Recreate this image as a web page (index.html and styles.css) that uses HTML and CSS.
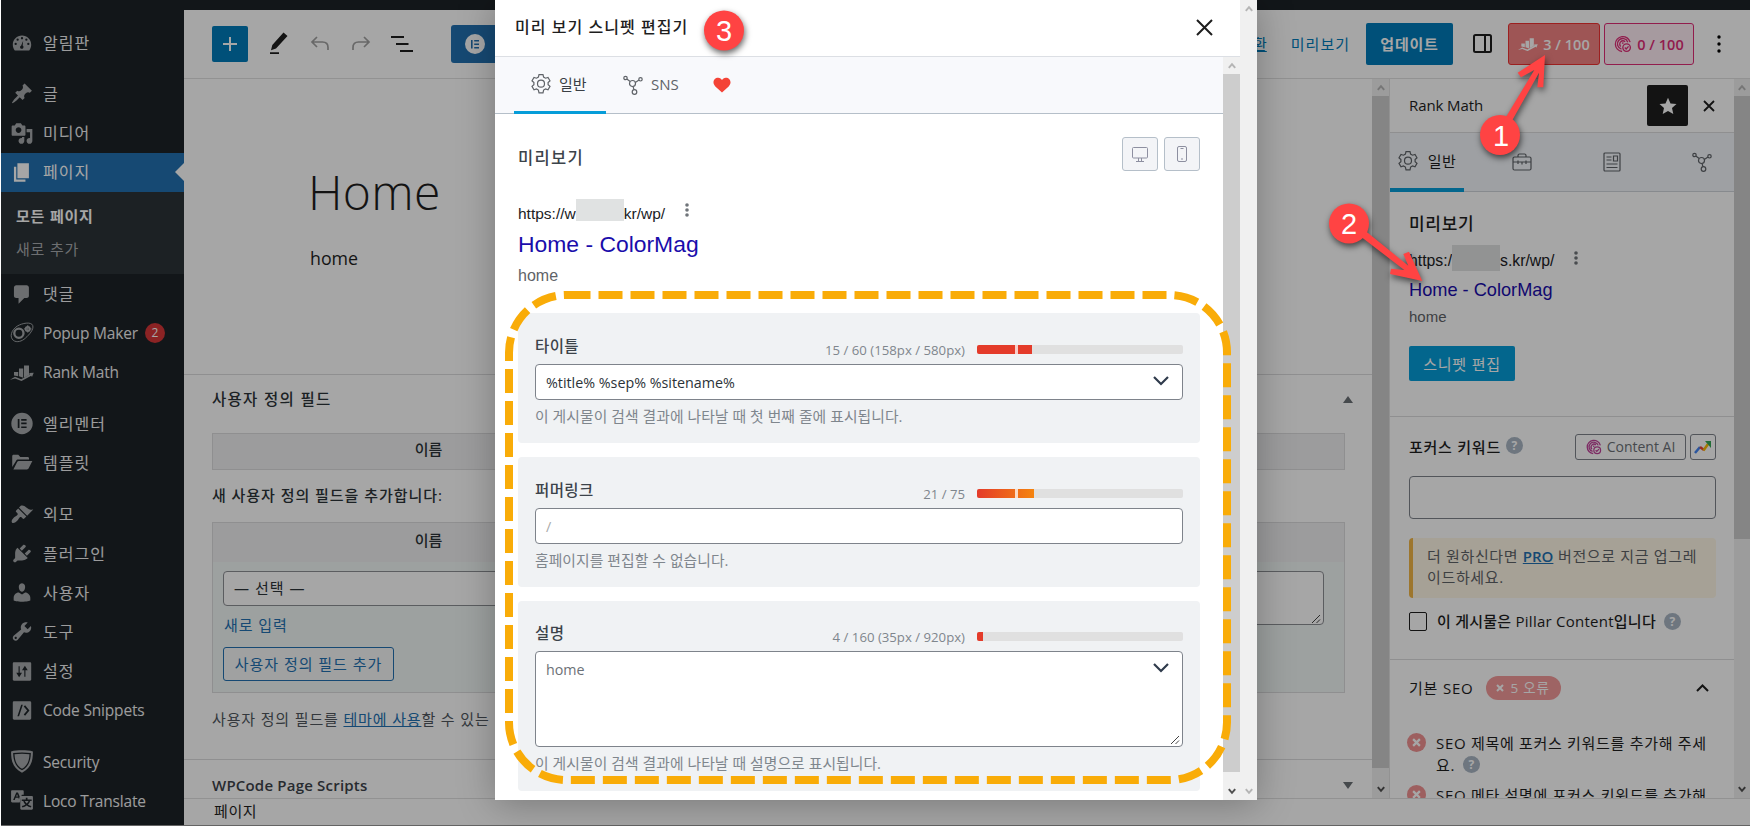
FILE: index.html
```
<!DOCTYPE html>
<html lang="ko">
<head>
    <meta charset="UTF-8" />
    <meta name="viewport" content="width=device-width, initial-scale=1.0" />
    <title>페이지 편집</title>
    <link rel="stylesheet" href="styles.css">
</head>
<body>
    <svg class="sprite">
        <symbol id="gear" viewBox="0 0 20 20"><path d="M8 .6h4l.6 2.500 1.900 1.100 2.500-.8 2 3.400-1.900 1.700v2.200l1.900 1.700-2 3.400-2.500-.8-1.900 1.100-.6 2.700H8l-.6-2.700-1.900-1.100-2.500.8-2-3.400 1.900-1.700V8.500L1 6.800l2-3.400 2.500.8 1.900-1.100z" /><circle cx="10" cy="9.700" r="3.500" /></symbol>
        <symbol id="share" viewBox="0 0 20 20"><circle cx="9.500" cy="8.500" r="3" /><circle cx="2.500" cy="3" r="1.700" /><circle cx="17.500" cy="4.300" r="1.700" /><circle cx="11.500" cy="17" r="2.300" /><path d="M3.800 4.100l3.400 2.500M12.300 7.400l3.700-2.300M10.100 11.500l.8 3.200" /></symbol>
        <symbol id="chart" viewBox="0 0 24 16"><path d="M4 7.500h4.200v4.300L4 11zM9 4h4.200v9.300L9 11.800zM14 1h5v9.400l-5 2.800z" /><path d="M0 15.200l5-2.900 6.200 2.400 8.600-5-.7-1.100 4.600-.4-1.700 4.200-.8-1.200-9.700 5.300-6.400-2.400z" /></symbol>
        <symbol id="ai" viewBox="0 0 20 20"><path d="M9 18.300A8.300 8.300 0 1 1 17.900 8M8.300 15.600A5.900 5.900 0 1 1 15.300 8M7.500 12.700A3.400 3.400 0 1 1 12.400 7.500M9 9.500l1.500-1" /><circle cx="14" cy="14" r="4.200" /><path d="M12 14l1.500 1.500 2.700-2.900" /></symbol>
        <symbol id="up" viewBox="0 0 8 7"><path d="M.8 5.800L4 2.200l3.200 3.600" /></symbol>
        <symbol id="down" viewBox="0 0 8 7"><path d="M.8 1.200L4 4.800l3.200-3.600" /></symbol>
        <symbol id="grip" viewBox="0 0 10 10"><path d="M1 9l8-8M5.500 9L9 5.500" /></symbol>
    </svg>

    <div class="page">
        <div class="adminbar"></div>
        <div class="workspace">
            <nav class="sidebar">
                <a class="menu-item"><svg viewBox="0 0 20 20"><path fill-rule="evenodd" d="M3.760 17h12.480c1.100-1.370 1.760-3.110 1.760-5 0-4.420-3.580-8-8-8s-8 3.580-8 8c0 1.890.66 3.630 1.760 5zM10 5.300a1 1 0 1 1 0 2 1 1 0 0 1 0-2zM6.200 6.500a1 1 0 1 1 0 2 1 1 0 0 1 0-2zM13.800 6.500a1 1 0 1 1 0 2 1 1 0 0 1 0-2zM4.500 10.200a1 1 0 1 1 0 2 1 1 0 0 1 0-2zM15.500 10.200a1 1 0 1 1 0 2 1 1 0 0 1 0-2zM11 8.500l-.4 4.200c.8.600.9 1.500.4 2.200-.7.800-2 .8-2.500-.2-.4-.9 0-1.600.7-1.900z" /></svg>알림판</a>
                <div class="menu-gap"></div>
                <a class="menu-item"><svg viewBox="0 0 20 20"><path d="M10.440 3.020l1.820-1.820 6.360 6.350-1.830 1.820c-1.050-.68-2.480-.57-3.410.36l-.75.75c-.92.93-1.040 2.350-.35 3.410l-1.830 1.820-2.410-2.410-2.800 2.790c-.42.42-3.380 2.710-3.800 2.290s1.860-3.390 2.280-3.810l2.790-2.790L4.100 9.360l1.830-1.820c1.050.69 2.480.57 3.400-.36l.75-.75c.93-.92 1.050-2.350.36-3.410z" /></svg>글</a>
                <a class="menu-item"><svg viewBox="0 0 20 20"><path fill-rule="evenodd" d="M13 11V4c0-.55-.45-1-1-1h-1.670L9 1H5L3.670 3H2c-.55 0-1 .45-1 1v7c0 .55.45 1 1 1h10c.55 0 1-.45 1-1zM7 4.500c1.380 0 2.500 1.120 2.500 2.500S8.380 9.500 7 9.500 4.500 8.380 4.500 7 5.620 4.500 7 4.500zM14 6h5v10.500c0 1.380-1.120 2.500-2.500 2.500S14 17.880 14 16.500s1.120-2.500 2.500-2.500c.17 0 .34.02.5.05V9h-3V6zm-4 8.050V13h2v3.500c0 1.380-1.120 2.500-2.500 2.500S7 17.880 7 16.500 8.120 14 9.500 14c.17 0 .34.02.5.05z" /></svg>미디어</a>
                <a class="menu-item current"><svg viewBox="0 0 20 20"><path d="M6 15V2h10v13H6zm-1 1h8v2H3V5h2v11z" /></svg>페이지</a>
                <div class="submenu">
                    <a class="active">모든 페이지</a>
                    <a>새로 추가</a>
                </div>
                <a class="menu-item"><svg viewBox="0 0 20 20"><path d="M5 2h9c1.100 0 2 .9 2 2v7c0 1.100-.9 2-2 2h-2l-5 5v-5H5c-1.100 0-2-.9-2-2V4c0-1.100.9-2 2-2z" /></svg>댓글</a>
                <a class="menu-item latin"><svg class="line" viewBox="0 0 20 20"><path d="M6 3.500C10 1 18-.5 19.300 3c1.200 3.500-3 8-6.300 11-3 2.800-7.500 4.200-10.500 2C-1 13 .5 7 6 3.500z" /><circle cx="7.300" cy="9.800" r="4" stroke-width="2" /><circle cx="15" cy="6" r="1.800" stroke-width="1.600" /><path d="M15 2.700v6.600M11.700 6h6.600" /></svg>Popup Maker<span class="count">2</span></a>
                <a class="menu-item latin"><svg><use href="#chart" /></svg>Rank Math</a>
                <div class="menu-gap"></div>
                <a class="menu-item"><svg viewBox="0 0 20 20"><path fill-rule="evenodd" d="M10 .7a9.300 9.300 0 1 1 0 18.600A9.300 9.300 0 0 1 10 .7zM6.300 6v8h1.500V6zm3 0v1.500H14V6zm0 3.200v1.500H14V9.200zm0 3.300V14H14v-1.500z" /></svg>엘리멘터</a>
                <a class="menu-item"><svg viewBox="0 0 20 20"><path d="M1.500 14V4.500c0-.8.500-1.300 1.300-1.300h4l1.700 2h6.300c.8 0 1.300.5 1.300 1.200v1H6.800c-.9 0-1.600.4-2 1.200zM2.500 16l3.300-6.400c.3-.6.8-.9 1.500-.9H19l-3.200 6.300c-.3.6-.8 1-1.500 1z" /></svg>템플릿</a>
                <div class="menu-gap"></div>
                <a class="menu-item"><svg viewBox="0 0 20 20"><path d="M14.480 11.060L7.410 3.990l1.500-1.500c.5-.56 2.300-.47 3.510.32 1.210.8 1.430 1.280 2.910 2.100 1.180.64 2.450 1.260 4.450.85zm-.71.71L6.700 4.700 4.930 6.470c-.39.39-.39 1.020 0 1.410l1.060 1.060c.39.39.39 1.030 0 1.420-.6.6-1.430 1.110-2.210 1.690-.35.26-.7.53-1.010.84C1.430 14.230.4 16.080 1.400 17.070c.99 1 2.840-.03 4.180-1.360.31-.31.58-.66.85-1.020.57-.78 1.080-1.610 1.690-2.210.39-.39 1.020-.39 1.410 0l1.060 1.060c.39.39 1.020.39 1.410 0z" /></svg>외모</a>
                <a class="menu-item"><svg viewBox="0 0 20 20"><path d="M13.110 4.360L9.870 7.600 8 5.730l3.240-3.240c.35-.34 1.050-.2 1.560.32.52.51.66 1.210.31 1.550zm-8 1.770l.91-1.120 9.010 9.010-1.190.84c-.71.71-2.630 1.160-3.820 1.160H6.140L4.900 17.260c-.59.59-1.540.59-2.120 0-.59-.58-.59-1.530 0-2.120l1.240-1.240v-3.880c0-1.130.4-3.190 1.090-3.890zm7.260 3.970l3.240-3.240c.34-.35 1.040-.21 1.550.31.52.51.66 1.210.31 1.550l-3.240 3.250z" /></svg>플러그인</a>
                <a class="menu-item"><svg viewBox="0 0 20 20"><path d="M10 9.250c-2.270 0-2.730-3.440-2.730-3.440C7 4.020 7.820 2 9.970 2c2.160 0 2.980 2.020 2.710 3.810 0 0-.41 3.440-2.680 3.440zm0 2.570L12.720 10c2.390 0 4.520 2.330 4.520 4.530v2.490s-3.650 1.130-7.240 1.130c-3.650 0-7.240-1.130-7.240-1.130v-2.490c0-2.250 1.940-4.480 4.470-4.480z" /></svg>사용자</a>
                <a class="menu-item"><svg viewBox="0 0 20 20"><path fill-rule="evenodd" d="M16.680 9.770c-1.340 1.340-3.300 1.670-4.950.99l-5.410 6.520c-.99.99-2.590.99-3.580 0s-.99-2.590 0-3.570l6.520-5.420c-.68-1.650-.35-3.610.99-4.950 1.280-1.280 3.120-1.620 4.720-1.060l-2.890 2.890 2.820 2.820 2.860-2.870c.53 1.580.18 3.390-1.080 4.650zM3.810 16.210c.4.39 1.040.39 1.430 0 .4-.4.4-1.040 0-1.430-.39-.4-1.030-.4-1.430 0-.39.39-.39 1.030 0 1.430z" /></svg>도구</a>
                <a class="menu-item"><svg viewBox="0 0 20 20"><path fill-rule="evenodd" d="M18 17V3c0-.55-.45-1-1-1H3c-.55 0-1 .45-1 1v14c0 .55.45 1 1 1h14c.55 0 1-.45 1-1zM8 11h2l-2.500 4L5 11h2V5.500h1zM13 9v5.500h-1V9h-2l2.500-4L15 9z" /></svg>설정</a>
                <a class="menu-item latin"><svg viewBox="0 0 20 20"><path fill-rule="evenodd" d="M3.200 2h13.600c.8 0 1.200.5 1.200 1.200v13.600c0 .8-.5 1.200-1.200 1.200H3.200c-.8 0-1.200-.5-1.200-1.200V3.200c0-.8.500-1.200 1.200-1.200zM9.300 5L6 15h1.400l3.300-10zM11.500 6.500l3 3.500-3 3.500 1.200 1 3.800-4.500-3.800-4.500z" /></svg>Code Snippets</a>
                <div class="menu-gap"></div>
                <a class="menu-item latin"><svg viewBox="0 0 20 20"><path fill-rule="evenodd" d="M.5 1.200C6 0 14 0 19.500 1.200c0 9-2 14.800-9.500 18.500C2.500 16 .5 10.200.5 1.200zM2.300 2.700c.2 7.300 2.200 12 7.700 15 5.500-3 7.500-7.700 7.700-15-4.700-.8-10.700-.8-15.400 0z" /><path d="M3.500 3.700c4-.6 9-.6 13 0-.3 6.300-2 10-6.500 12.700C5.500 13.700 3.800 10 3.500 3.700z" /></svg>Security</a>
                <a class="menu-item latin"><svg viewBox="0 0 20 20"><path fill-rule="evenodd" d="M1.500 1h9c.6 0 1 .4 1 1v3H9.800L8 11.700H1.500c-.6 0-1-.4-1-1V2c0-.6.4-1 1-1zM2.300 9.500h1.400l.7-1.800h2.500L7.400 9 8 6.500 6.500 3H5zM4.900 6.500l.8-2 .8 2z" /><path fill-rule="evenodd" d="M9.500 6h9c.6 0 1 .4 1 1v10c0 .6-.4 1-1 1h-9c-.6 0-1-.4-1-1V7c0-.6.4-1 1-1zM13.300 7.500v1.600h-3.500v1.300h1.300c.3 1.200 1 2.200 1.900 3-1 .7-2 1.100-3.200 1.400l.6 1.300c1.400-.4 2.600-1 3.700-1.800 1 .8 2.200 1.400 3.500 1.800l.6-1.300c-1.100-.3-2.100-.8-3-1.400.9-.8 1.500-1.800 1.900-3h1.300V9.100h-3.600V7.500zM12.500 10.400h3.200c-.3.800-.9 1.500-1.600 2.100-.7-.6-1.300-1.300-1.600-2.100z" /></svg>Loco Translate</a>
            </nav>

            <main class="editor">
                <header class="toolbar">
                    <button class="insert"><svg width="14" height="14" viewBox="0 0 14 14"><path d="M7 0v14M0 7h14" /></svg></button>
                    <div class="tools">
                        <svg width="20" height="24" viewBox="0 0 20 24"><path d="M14.500.500l4 3.600L7 16.500l-5 1.700L3.300 13zM1 20.300h9v1.700H1z" fill="#1e1e1e" /></svg>
                        <svg class="muted" width="20" height="16" viewBox="0 0 20 16"><path d="M7 1L2 6l5 5M2 6h10.500c3.500 0 5.500 2 5.500 5.500V14" /></svg>
                        <svg class="muted" width="20" height="16" viewBox="0 0 20 16"><path d="M13 1l5 5-5 5M18 6H7.500C4 6 2 8 2 11.500V14" /></svg>
                        <svg class="dark" width="23" height="18" viewBox="0 0 23 18"><path d="M0 2h13M5 9h12.500M9 16h13" /></svg>
                    </div>
                    <button class="elementor"><svg width="20" height="20" viewBox="0 0 20 20"><circle cx="10" cy="10" r="10" fill="#fff" /><path d="M6 6h1.600v8.500H6zM9.200 6h4.800v1.600H9.200zM9.200 9.500h4.800V11H9.200zM9.200 13h4.800v1.500H9.200z" fill="#2271b1" /></svg></button>
                    <div class="toolbar-right">
                        <a class="switch-link">초안으로 전환</a>
                        <a class="preview-link">미리보기</a>
                        <button class="update">업데이트</button>
                        <svg class="layout-icon" width="19" height="19" viewBox="0 0 19 19"><rect x="1" y="1" width="17" height="17" rx="1.500" /><path d="M12 1v17" /></svg>
                        <div class="score seo"><svg width="20" height="14"><use href="#chart" /></svg>3 / 100</div>
                        <div class="score ai"><svg width="18" height="18"><use href="#ai" /></svg>0 / 100</div>
                        <svg class="more" width="4" height="18" viewBox="0 0 4 18"><circle cx="2" cy="2" r="1.700" /><circle cx="2" cy="9" r="1.700" /><circle cx="2" cy="16" r="1.700" /></svg>
                    </div>
                </header>

                <div class="editor-body">
                    <section class="content">
                        <div class="canvas">
                            <h1>Home</h1>
                            <p>home</p>
                        </div>
                        <div class="metabox">
                            <div class="metabox-title">사용자 정의 필드<svg width="10" height="7" viewBox="0 0 10 7"><path d="M5 0l5 7H0z" /></svg></div>
                            <div class="field-head boxed"><span>이름</span></div>
                            <div class="add-label">새 사용자 정의 필드을 추가합니다:</div>
                            <div class="new-field">
                                <div class="field-head"><span>이름</span></div>
                                <div class="new-field-row">
                                    <div class="new-field-name">
                                        <div class="select">— 선택 —</div>
                                        <a>새로 입력</a>
                                        <button class="outline">사용자 정의 필드 추가</button>
                                    </div>
                                    <div class="value-box"><svg width="10" height="10"><use href="#grip" /></svg></div>
                                </div>
                            </div>
                            <p class="note">사용자 정의 필드를 <a>테마에 사용</a>할 수 있는</p>
                        </div>
                        <div class="scripts">WPCode Page Scripts<svg width="10" height="7" viewBox="0 0 10 7"><path d="M5 7l5-7H0z" /></svg></div>
                    </section>
                    <div class="scrollbar content-scroll"><svg><use href="#up" /></svg><i class="thumb"></i><svg class="on"><use href="#down" /></svg></div>

                    <aside class="panel">
                        <div class="panel-header">
                            <span>Rank Math</span>
                            <div class="star"><svg width="18" height="18" viewBox="0 0 18 18"><path d="M9 .8l2.500 5.600 6 .6-4.500 4.100 1.300 6L9 14l-5.300 3.100 1.300-6L.5 7l6-.6z" fill="#fff" /></svg></div>
                            <svg class="close-small" width="12" height="12" viewBox="0 0 12 12"><path d="M1 1l10 10M11 1L1 11" /></svg>
                        </div>
                        <div class="panel-tabs">
                            <div class="panel-tab active"><svg><use href="#gear" /></svg>일반</div>
                            <div class="panel-tab"><svg viewBox="0 0 20 20"><rect x="1" y="5" width="18" height="13" rx="1.500" /><path d="M6 5V3.500C6 2.500 6.500 2 7.500 2h5c1 0 1.500.5 1.500 1.500V5M1 10h18M6 8.500V12M14 8.500V12M10 10v2.500" /></svg></div>
                            <div class="panel-tab"><svg viewBox="0 0 20 20"><rect x="2" y="1" width="16" height="18" rx="1" /><path d="M4.500 5h5M4.500 8h5M4.500 12h11M4.500 15.500h11M11.500 4h4v5h-4z" /></svg></div>
                            <div class="panel-tab"><svg><use href="#share" /></svg></div>
                        </div>
                        <div class="panel-preview">
                            <h4>미리보기</h4>
                            <div class="url">https:/<i class="redact"></i>s.kr/wp/<svg class="kebab" width="4" height="14" viewBox="0 0 4 14"><circle cx="2" cy="2" r="1.800" /><circle cx="2" cy="7" r="1.800" /><circle cx="2" cy="12" r="1.800" /></svg></div>
                            <div class="serp-title">Home - ColorMag</div>
                            <div class="serp-desc">home</div>
                            <button class="edit-snippet">스니펫 편집</button>
                        </div>
                        <div class="focus">
                            <div class="focus-row">
                                <span>포커스 키워드</span><i class="help">?</i>
                                <div class="content-ai"><svg width="16" height="16"><use href="#ai" /></svg>Content AI</div>
                                <div class="trend"><svg width="18" height="14" viewBox="0 0 18 14"><path d="M1 13l5-6" stroke="#4285f4" /><path d="M6 7l4 3" stroke="#ea4335" /><path d="M9.500 10.500L14 4" stroke="#fbbc04" /><path d="M11 1h6v7z" fill="#34a853" stroke="none" /></svg></div>
                            </div>
                            <div class="keyword-input"></div>
                            <div class="notice">더 원하신다면 <b>PRO</b> 버전으로 지금 업그레<br>이드하세요.</div>
                            <div class="pillar"><i class="checkbox"></i><span>이 게시물은 Pillar Content입니다</span><i class="help">?</i></div>
                        </div>
                        <div class="basic-seo">
                            <div class="basic-head"><span>기본 SEO</span><div class="errors"><svg width="8" height="8" viewBox="0 0 8 8"><path d="M1 1l6 6M7 1L1 7" /></svg>5 오류</div><svg class="fold" width="13" height="8" viewBox="0 0 13 8"><path d="M1 7l5.500-5.500L12 7" /></svg></div>
                            <div class="check"><i class="fail"><svg width="9" height="9" viewBox="0 0 8 8"><path d="M1 1l6 6M7 1L1 7" /></svg></i><div>SEO 제목에 포커스 키워드를 추가해 주세<br>요. <i class="help">?</i></div></div>
                            <div class="check"><i class="fail"><svg width="9" height="9" viewBox="0 0 8 8"><path d="M1 1l6 6M7 1L1 7" /></svg></i><div>SEO 메타 설명에 포커스 키워드를 추가해</div></div>
                        </div>
                    </aside>
                    <div class="scrollbar panel-scroll"><svg><use href="#up" /></svg><i class="thumb"></i><svg class="on"><use href="#down" /></svg></div>
                </div>
                <footer class="breadcrumb">페이지</footer>
            </main>
        </div>
        <div class="page-end"></div>
    </div>

    <div class="overlay"></div>

    <div class="modal">
        <div class="modal-main">
            <div class="modal-header">
                <h2>미리 보기 스니펫 편집기</h2>
                <svg width="17" height="17" viewBox="0 0 17 17"><path d="M1 1l15 15M16 1L1 16" /></svg>
            </div>
            <div class="modal-scroll">
                <div class="modal-content">
                    <div class="tabs">
                        <div class="tab active"><svg><use href="#gear" /></svg>일반</div>
                        <div class="tab"><svg><use href="#share" /></svg><span>SNS</span></div>
                        <div class="tab"><svg class="heart" viewBox="0 0 20 18"><path d="M10 17.500L2.500 10.600C-2 6 1.500.500 5.800.800 7.700.900 9.200 2 10 3.500 10.800 2 12.300.900 14.200.800 18.500.500 22 6 17.500 10.600z" /></svg></div>
                    </div>
                    <div class="preview">
                        <div class="preview-head">
                            <h3>미리보기</h3>
                            <div class="device"><svg width="16" height="15" viewBox="0 0 16 15"><rect x=".5" y=".5" width="15" height="10.500" rx="1" /><path d="M4 14.500h8M6.500 11v3.500M9.500 11v3.500" /></svg></div>
                            <div class="device"><svg width="10" height="16" viewBox="0 0 10 16"><rect x=".5" y=".5" width="9" height="15" rx="1.500" /><path d="M3.500 2.500h3M4 13h2" /></svg></div>
                        </div>
                        <div class="url">https://w<i class="redact"></i>kr/wp/<svg class="kebab" width="4" height="14" viewBox="0 0 4 14"><circle cx="2" cy="2" r="1.800" /><circle cx="2" cy="7" r="1.800" /><circle cx="2" cy="12" r="1.800" /></svg></div>
                        <div class="serp-title">Home - ColorMag</div>
                        <div class="serp-desc">home</div>
                    </div>
                    <div class="cards">
                        <div class="card">
                            <div class="card-head"><label>타이틀</label><span>15 / 60 (158px / 580px)</span><div class="meter"><i class="fill marked" style="width: 55px"></i></div></div>
                            <div class="input">%title% %sep% %sitename%<svg class="caret" width="16" height="10" viewBox="0 0 16 10"><path d="M1 1l7 7 7-7" /></svg></div>
                            <p class="hint">이 게시물이 검색 결과에 나타날 때 첫 번째 줄에 표시됩니다.</p>
                        </div>
                        <div class="card">
                            <div class="card-head"><label>퍼머링크</label><span>21 / 75</span><div class="meter"><i class="fill marked warm" style="width: 57px"></i></div></div>
                            <div class="input slash">/</div>
                            <p class="hint">홈페이지를 편집할 수 없습니다.</p>
                        </div>
                        <div class="card">
                            <div class="card-head"><label>설명</label><span>4 / 160 (35px / 920px)</span><div class="meter"><i class="fill" style="width: 6px"></i></div></div>
                            <div class="input area">home<svg class="caret" width="16" height="10" viewBox="0 0 16 10"><path d="M1 1l7 7 7-7" /></svg><svg class="grip" width="10" height="10"><use href="#grip" /></svg></div>
                            <p class="hint">이 게시물이 검색 결과에 나타날 때 설명으로 표시됩니다.</p>
                        </div>
                    </div>
                </div>
                <div class="scrollbar modal-bar"><svg><use href="#up" /></svg><i class="thumb"></i><svg class="on"><use href="#down" /></svg></div>
            </div>
        </div>
        <div class="scrollbar outer-bar"><svg><use href="#up" /></svg><i class="space"></i><svg><use href="#down" /></svg></div>
    </div>

    <!-- step markers drawn over the whole screen -->
    <svg class="annotations" width="1750" height="826" viewBox="0 0 1750 826">
        <rect class="outline-dash" x="509" y="295" width="718" height="485" rx="57.500" />
        <g class="marks">
            <path d="M1545 55l-27.300 17.700 3.300 4.600 13.300-7.300L1500 127l6.500 3.500L1539 72.700l-1.700 14.600h6z" />
            <path d="M1422.300 281L1409 251.700l-5.700 2.300 5 11.700L1352 220l-5 6 57.300 44-13.300-1.300-1 5.300z" />
            <circle cx="724" cy="30.500" r="20" />
            <circle cx="1500" cy="135" r="20" />
            <circle cx="1349" cy="223.500" r="20" />
        </g>
        <text x="724" y="40.500">3</text>
        <text x="1501" y="145.500">1</text>
        <text x="1349" y="234">2</text>
    </svg>
</body>
</html>
```
FILE: styles.css
```
:root {
    --text: #1e1e1e;
    --muted: #7f868d;
    --wp-blue: #2271b1;
    --button-blue: #007cba;
    --accent: #069dd9;
    --border: #dcdcde;
    --field-border: #7e838b;
    --mark: #ff4343;
}

* {
    margin: 0;
    padding: 0;
    box-sizing: border-box;
}

body {
    width: 1750px;
    height: 826px;
    overflow: hidden;
    font-family: 'Open Sans', 'Noto Sans CJK KR', sans-serif;
    font-size: 15px;
    line-height: 22px;
    color: var(--text);
    background: #fff;
}

button {
    font: inherit;
    border: none;
}

i {
    font-style: normal;
}

svg {
    display: block;
    flex: none;
}

h1, h2, h3, h4 {
    font-weight: 500;
}

.sprite {
    position: absolute;
    width: 0;
    height: 0;
}

.page {
    height: 826px;
    padding-left: 1px;
    display: flex;
    flex-direction: column;
}

.adminbar {
    height: 10px;
    background: #1d2327;
}

.workspace {
    height: 815px;
    display: flex;
}

.page-end {
    height: 1px;
    background: #9a9a9a;
}

/* admin menu */
.sidebar {
    width: 183px;
    padding-top: 13px;
    background: #1d2327;
    color: #f0f0f1;
    font-size: 16px;
    letter-spacing: 1px;
    overflow: hidden;
}

.menu-item {
    height: 39.200px;
    padding-left: 9px;
    display: flex;
    align-items: center;
    position: relative;
    white-space: nowrap;
}

.menu-item svg {
    width: 24px;
    height: 23px;
    margin-right: 9px;
    fill: #a7aaad;
}

.menu-item svg.line {
    fill: none;
    stroke: #a7aaad;
    stroke-width: .8;
}

.latin {
    font-size: 15.500px;
    letter-spacing: -.18px;
}

.menu-gap {
    height: 12.200px;
}

.current {
    background: var(--wp-blue);
    color: #fff;
}

.current svg {
    fill: #fff;
}

.current::after {
    content: '';
    position: absolute;
    right: 0;
    top: 10px;
    border: 9px solid transparent;
    border-left-width: 0;
    border-right-color: #fff;
}

.submenu {
    height: 82.500px;
    padding: 8px 0 0 15px;
    background: #2c3338;
    font-size: 15px;
    letter-spacing: .8px;
}

.submenu a {
    display: block;
    height: 33px;
    line-height: 32px;
    color: #a8abae;
}

.submenu .active {
    color: #fff;
    font-weight: 600;
}

.count {
    width: 20px;
    height: 20px;
    margin-left: 7px;
    border-radius: 50%;
    background: #d63638;
    color: #fff;
    font-size: 12px;
    line-height: 20px;
    text-align: center;
}

/* editor */
.editor {
    width: 1566px;
    display: flex;
    flex-direction: column;
}

.toolbar {
    height: 69px;
    padding: 0 29px 1px 28px;
    border-bottom: 1px solid #e0e0e0;
    display: flex;
    align-items: center;
}

.insert {
    width: 36px;
    height: 36px;
    display: grid;
    place-items: center;
    border-radius: 2px;
    background: var(--button-blue);
}

.insert svg {
    stroke: #fff;
    stroke-width: 2;
}

.tools {
    display: flex;
    align-items: center;
    gap: 21px;
    margin-left: 21px;
}

.muted, .dark {
    fill: none;
    stroke: #a0a0a0;
    stroke-width: 1.700;
}

.dark {
    margin-left: -1px;
    stroke: #1e1e1e;
    stroke-width: 2;
}

.elementor {
    width: 160px;
    height: 38px;
    margin-left: 37px;
    padding-left: 14px;
    background: var(--wp-blue);
    border-radius: 3px;
}

.toolbar-right {
    margin-left: auto;
    display: flex;
    align-items: center;
}

.toolbar-right a {
    color: var(--button-blue);
}

.switch-link {
    text-decoration: underline;
}

.preview-link {
    margin: 0 16px 0 24px;
    letter-spacing: 1px;
}

.update {
    width: 87px;
    height: 42px;
    background: var(--button-blue);
    color: #fff;
    border-radius: 2px;
    font-weight: 600;
    letter-spacing: .8px;
}

.layout-icon {
    margin: 0 16px 0 20px;
    fill: none;
    stroke: #1e1e1e;
    stroke-width: 2;
}

.score {
    height: 42px;
    padding-top: 2px;
    display: flex;
    align-items: center;
    justify-content: center;
    gap: 5px;
    border: 1px solid;
    border-radius: 3px;
    font-weight: 600;
    font-size: 14.500px;
    white-space: nowrap;
}

.score svg {
    margin-top: -2px;
}

.score.seo {
    width: 92px;
    margin-right: 4px;
    background: #f38383;
    border-color: #f03232;
    color: #fff;
}

.seo svg {
    fill: #fff;
}

.score.ai {
    width: 90px;
    background: #ffedf5;
    border-color: #e02d77;
    color: #e02d77;
}

.score.ai svg {
    fill: none;
    stroke: #e02d77;
    stroke-width: 1.500;
}

.more {
    margin-left: 23px;
}

.editor-body {
    height: 719px;
    display: flex;
    overflow: hidden;
}

.content {
    width: 1188px;
}

.canvas {
    height: 295px;
    padding: 84px 0 0 126px;
}

.canvas h1 {
    margin-left: -2px;
    font-size: 48px;
    font-weight: 300;
    line-height: 58px;
    letter-spacing: .3px;
}

.canvas p {
    margin-top: 25px;
    font-size: 17.800px;
    line-height: 24px;
}

.metabox {
    height: 385px;
    padding: 0 27px 0 28px;
    border-top: 1px solid var(--border);
    color: #2c3338;
}

.metabox-title {
    height: 58px;
    padding-bottom: 10px;
    display: flex;
    align-items: center;
    justify-content: space-between;
    font-size: 15.500px;
    font-weight: 500;
    letter-spacing: 1.300px;
}

.metabox-title svg {
    margin: 0 -8px 0 0;
    fill: #6b7075;
}

.scripts {
    height: 39px;
    padding: 12px 19px 0 28px;
    display: flex;
    align-items: center;
    justify-content: space-between;
    border-top: 1px solid var(--border);
    color: #3c434a;
    font-weight: 600;
    letter-spacing: .2px;
}

.scripts svg {
    fill: #6b7075;
}

.field-head {
    height: 39px;
    background: #f0f0f1;
    font-weight: 500;
}

.field-head span {
    display: block;
    width: 431px;
    line-height: 31px;
    text-align: center;
}

.boxed {
    height: 37px;
    border: 1px solid var(--border);
}

.add-label {
    margin: 14px 0 16px;
    font-weight: 500;
    letter-spacing: .95px;
}

.new-field {
    height: 171px;
    border: 1px solid var(--border);
    background: #f2f7f6;
}

.new-field .field-head span {
    line-height: 34px;
}

.new-field-row {
    display: flex;
    justify-content: space-between;
    padding: 9px 20px 0 10px;
}

.new-field-name {
    width: 412px;
}

.select {
    height: 35px;
    padding-left: 10px;
    border: 1px solid #8c8f94;
    border-radius: 4px;
    background: #fff;
    line-height: 33px;
    letter-spacing: 1px;
}

.new-field-name a {
    display: block;
    padding: 8px 0 11px 1px;
    color: var(--wp-blue);
    letter-spacing: .9px;
}

.outline {
    width: 171px;
    height: 34px;
    border: 1px solid var(--wp-blue);
    border-radius: 3px;
    background: #f6f7f7;
    color: var(--wp-blue);
    letter-spacing: .95px;
}

.value-box {
    width: 668px;
    height: 54px;
    padding: 42px 2px 0 0;
    border: 1px solid #8c8f94;
    border-radius: 4px;
    background: #fff;
}

.value-box svg {
    margin-left: auto;
    stroke: #444;
}

.note {
    margin-top: 15px;
    color: #50575e;
    letter-spacing: .85px;
    white-space: nowrap;
}

.note a {
    color: var(--wp-blue);
    text-decoration: underline;
}

.breadcrumb {
    height: 27px;
    padding-left: 30px;
    border-top: 1px solid #e0e0e0;
    line-height: 25px;
    letter-spacing: .6px;
}

/* scrollbars */
.scrollbar {
    width: 17px;
    background: #f0f0f0;
    display: flex;
    flex-direction: column;
    align-items: center;
    flex: none;
}

.scrollbar svg {
    width: 8px;
    height: 7px;
    margin: 5px 0;
    fill: none;
    stroke: #b5b5b5;
    stroke-width: 2;
}

.scrollbar svg.on {
    margin-top: auto;
    stroke: #505050;
}

.thumb {
    width: 100%;
    height: 672px;
    background: #cdcdcd;
}

.space {
    flex: 1;
}

.panel-scroll {
    width: 16px;
}

.panel-scroll .thumb {
    height: 443px;
}

/* settings panel */
.panel {
    width: 345px;
    overflow: hidden;
    border-left: 1px solid #e0e0e0;
}

.panel-header {
    height: 54px;
    padding: 0 19px;
    display: flex;
    align-items: center;
    border-bottom: 1px solid var(--border);
}

.panel-header span {
    margin-top: -2px;
    letter-spacing: -.1px;
}

.star {
    width: 41px;
    height: 41px;
    margin: 0 15px 0 auto;
    display: grid;
    place-items: center;
    border-radius: 2px;
    background: #1e1e1e;
}

.close-small {
    stroke: #1e1e1e;
    stroke-width: 1.800;
}

.panel-tabs {
    height: 59px;
    display: flex;
    background: #f3f6fa;
    border-bottom: 1px solid #d0d4da;
}

.panel-tab {
    width: 90px;
    flex: none;
    display: flex;
    align-items: center;
    justify-content: center;
    gap: 10px;
    letter-spacing: .4px;
}

.panel-tab.active {
    width: 74px;
    height: 59px;
    margin-right: 13px;
    border-bottom: 4px solid var(--accent);
}

.panel-tab:last-child {
    margin-left: 0;
}

.panel-tab svg, .tab svg {
    width: 20px;
    height: 20px;
    fill: none;
    stroke: #5f6368;
    stroke-width: 1.200;
}

.panel-preview {
    height: 225px;
    padding: 21px 19px 0;
    border-bottom: 1px solid var(--border);
}

.panel-preview h4 {
    font-size: 17px;
    letter-spacing: .7px;
}

.url, .serp-title, .serp-desc {
    font-family: 'Liberation Sans', sans-serif;
}

.url {
    height: 26px;
    display: flex;
    align-items: center;
    font-size: 16px;
    color: #202124;
}

.redact {
    width: 48px;
    height: 26px;
    background: #e0e2e2;
}

.kebab {
    margin-left: 20px;
    fill: #70757a;
}

.panel-preview .url {
    height: 26px;
    margin-top: 10px;
    padding-top: 6px;
    font-size: 15.800px;
}

.panel-preview .redact, .panel-preview .kebab {
    margin-top: -6px;
}

.panel-preview .serp-title {
    margin-top: 8px;
    font-size: 18.200px;
    color: #1a0dab;
}

.panel-preview .serp-desc {
    margin-top: 5px;
    color: #5f6368;
}

.edit-snippet {
    width: 106px;
    height: 35px;
    margin-top: 18px;
    background: var(--accent);
    border-radius: 2px;
    color: #fff;
    letter-spacing: .8px;
}

.focus {
    height: 243px;
    padding: 17px 18px 0 19px;
    border-bottom: 1px solid var(--border);
}

.focus-row {
    height: 26px;
    display: flex;
    align-items: center;
    font-weight: 500;
    letter-spacing: .75px;
}

.help {
    width: 17px;
    height: 17px;
    margin: -3px 0 0 5px;
    border-radius: 50%;
    background: #a9b6c4;
    color: #fff;
    font-size: 12px;
    font-weight: 700;
    line-height: 17px;
    letter-spacing: 0;
    text-align: center;
}

.content-ai, .trend {
    height: 26px;
    display: flex;
    align-items: center;
    justify-content: center;
    border: 1px solid var(--field-border);
    border-radius: 3px;
}

.content-ai {
    width: 111px;
    margin: 0 4px 0 auto;
    gap: 5px;
    color: #6c7177;
    font-size: 14px;
    font-weight: 400;
    letter-spacing: 0;
}

.content-ai svg {
    fill: none;
    stroke: #c0439a;
    stroke-width: 1.600;
}

.trend {
    width: 26px;
}

.trend svg {
    fill: none;
    stroke-width: 2.500;
}

.keyword-input {
    height: 43px;
    margin-top: 16px;
    border: 1px solid var(--field-border);
    border-radius: 4px;
}

.notice {
    height: 60px;
    margin-top: 19px;
    padding: 8px 0 0 14px;
    border-left: 4px solid #f2b545;
    border-radius: 4px;
    background: #fff8e6;
    color: #5f6368;
    line-height: 21px;
    letter-spacing: .65px;
    white-space: nowrap;
}

.notice b {
    color: var(--wp-blue);
    font-weight: 600;
    letter-spacing: 0;
    text-decoration: underline;
}

.pillar {
    margin-top: 12px;
    display: flex;
    align-items: center;
    font-weight: 500;
    letter-spacing: .25px;
    white-space: nowrap;
}

.pillar .help {
    margin: 0 0 0 8px;
}

.checkbox {
    width: 18px;
    height: 19px;
    margin-right: 10px;
    border: 1px solid #1e1e1e;
    border-radius: 2px;
}

.basic-seo {
    padding: 16px 18px 0 19px;
}

.basic-head {
    height: 24px;
    display: flex;
    align-items: center;
    letter-spacing: .8px;
}

.errors {
    width: 75px;
    height: 24px;
    margin-left: 12px;
    display: flex;
    align-items: center;
    justify-content: center;
    gap: 6px;
    border-radius: 12px;
    background: #f39a9a;
    color: #fff;
    font-size: 13.500px;
}

.errors svg, .fail svg {
    stroke: #fff;
    stroke-width: 2;
}

.fold {
    margin: 0 7px 0 auto;
    fill: none;
    stroke: #1e1e1e;
    stroke-width: 2;
}

.check {
    margin: 32px -10px 0 -2px;
    display: flex;
    gap: 10px;
    letter-spacing: .7px;
    white-space: nowrap;
}

.check + .check {
    margin-top: 8px;
}

.check .help {
    display: inline-block;
    vertical-align: 2px;
    margin: 0 0 0 3px;
}

.fail {
    width: 19px;
    height: 19px;
    margin-top: 1px;
    display: grid;
    place-items: center;
    border-radius: 50%;
    background: #f19393;
}

.overlay {
    position: absolute;
    inset: 0 0 0 1px;
    background: rgba(0, 0, 0, .35);
}

/* snippet editor modal */
.modal {
    position: absolute;
    left: 495px;
    top: 0;
    width: 762px;
    height: 800px;
    display: flex;
    background: #fff;
    box-shadow: 0 4px 35px rgba(0, 0, 0, .28);
}

.modal-main {
    width: 745px;
}

.modal-header {
    height: 57px;
    padding: 0 27px 2px 20px;
    display: flex;
    align-items: center;
    justify-content: space-between;
    border-bottom: 1px solid #dcdfe4;
}

.modal-header h2 {
    font-size: 16px;
    letter-spacing: 1.050px;
}

.modal-header svg {
    stroke: #1e1e1e;
    stroke-width: 2;
}

.modal-scroll {
    height: 743px;
    display: flex;
}

.modal-content {
    width: 728px;
}

.tabs {
    height: 57px;
    padding-left: 19px;
    display: flex;
    background: #f8f9fc;
    border-bottom: 1px solid #b5bfc9;
}

.tab {
    height: 57px;
    padding: 0 17px 1px;
    display: flex;
    align-items: center;
    gap: 8px;
    color: #5f6368;
}

.tab.active {
    width: 92px;
    padding-bottom: 0;
    border-bottom: 3px solid var(--accent);
    color: #3a3f45;
}

.tab span {
    margin-top: -2px;
}

.tab svg.heart {
    width: 18px;
    height: 16px;
    fill: #f44336;
    stroke: none;
}

.preview {
    height: 199px;
    padding: 23px 23px 0;
}

.preview-head {
    height: 34px;
    display: flex;
    align-items: center;
}

.preview-head h3 {
    margin: 8px auto 0 0;
    font-size: 16.500px;
    letter-spacing: 1.300px;
    color: #3c434a;
}

.device {
    width: 36px;
    height: 34px;
    margin-left: 6px;
    display: grid;
    place-items: center;
    background: #f3f4f7;
    border: 1px solid #b5bfc9;
    border-radius: 3px;
}

.device svg {
    fill: none;
    stroke: #8d8fa0;
}

.preview .url {
    height: 22px;
    margin-top: 29px;
    padding-top: 6px;
    font-size: 15.500px;
}

.preview .redact {
    height: 22px;
    margin-top: -8px;
}

.preview .kebab {
    margin-top: -8px;
}

.preview .serp-title {
    margin-top: 9px;
    font-size: 22.900px;
    line-height: 26px;
    color: #1a0dab;
}

.preview .serp-desc {
    margin-top: 8px;
    font-size: 16px;
    color: #5f6368;
}

.cards {
    padding: 0 23px;
    display: flex;
    flex-direction: column;
    gap: 14px;
}

.card {
    height: 130px;
    padding: 22px 17px 0;
    background: #f0f2f4;
    border-radius: 4px;
}

.card:last-child {
    height: 190px;
    padding-top: 21px;
}

.card-head {
    height: 29px;
    display: flex;
    align-items: center;
    color: var(--muted);
    font-size: 13.200px;
}

.card-head label {
    margin: -7px auto 0 0;
    color: #3c434a;
    font-size: 15.500px;
    font-weight: 500;
    letter-spacing: .4px;
}

.card-head span {
    margin-top: 1px;
}

.meter {
    width: 206px;
    height: 9px;
    margin-left: 12px;
    background: #e0e0e0;
    border-radius: 2px;
    overflow: hidden;
}

.fill {
    display: block;
    height: 9px;
    background: #e43b2a;
}

.fill.warm {
    background: linear-gradient(90deg, #e43b2a, #f5840f);
}

/* light tick inside the filled part */
.marked::before {
    content: '';
    display: block;
    width: 3px;
    height: 9px;
    transform: translateX(38px);
    background: rgba(255, 255, 255, .75);
}

.input {
    height: 36px;
    padding: 0 13px 0 10px;
    display: flex;
    justify-content: space-between;
    position: relative;
    border: 1px solid var(--field-border);
    border-radius: 4px;
    background: #fff;
    line-height: 36px;
    color: #2c3338;
    font-size: 14.300px;
}

.input.slash {
    color: #aaa;
}

.input.area {
    height: 96px;
    color: #6c7177;
}

.caret {
    margin-top: 11px;
    fill: none;
    stroke: #2f3b4c;
    stroke-width: 2.200;
}

.grip {
    position: absolute;
    right: 2px;
    bottom: 1px;
    stroke: #444;
}

.hint {
    margin-top: 5px;
    color: var(--muted);
    font-size: 14.800px;
    letter-spacing: .07px;
    white-space: nowrap;
}

.modal-bar .thumb {
    height: 698px;
}

.outer-bar {
    height: 800px;
}

.annotations {
    position: absolute;
    left: 0;
    top: 0;
}

.outline-dash {
    fill: none;
    stroke: #f9ac08;
    stroke-width: 8;
    stroke-dasharray: 24 8;
}

.marks {
    fill: var(--mark);
    filter: drop-shadow(1px 3px 3px rgba(0, 0, 0, .6));
}

.annotations text {
    fill: #fff;
    font: 29px 'Liberation Sans', sans-serif;
    text-anchor: middle;
}
```
